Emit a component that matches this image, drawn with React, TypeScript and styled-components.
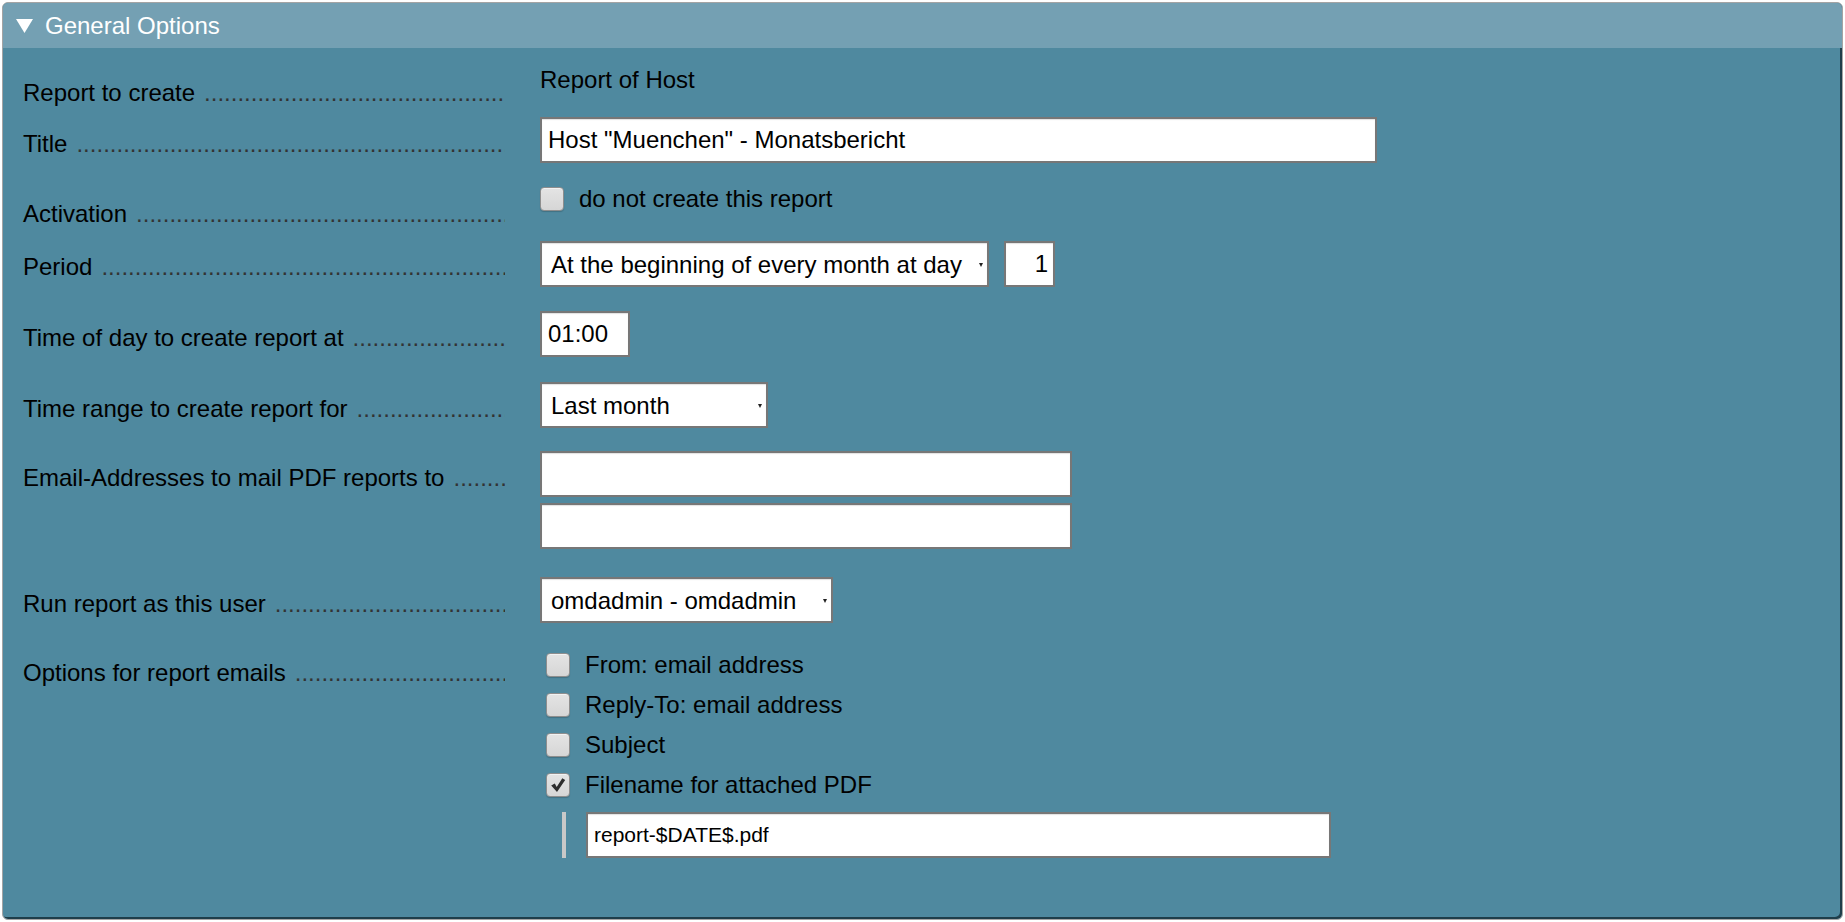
import React from "react";
import styled, { createGlobalStyle } from "styled-components";

const Global = createGlobalStyle`
  html, body { margin: 0; padding: 0; background: #ffffff; }
  body { font-family: "Liberation Sans", Arial, sans-serif; }
  * { box-sizing: border-box; }
`;

const Page = styled.div`
  width: 1845px;
  height: 922px;
  padding: 2px;
`;

const Panel = styled.section`
  height: 918px;
  border: 1px solid #a4a4a4;
  border-radius: 6px;
  background: #4f899f;
  box-shadow: inset -2px -2px 0 #1f3e4a;
  overflow: hidden;
  display: flex;
  flex-direction: column;
`;

const Header = styled.div`
  height: 45px;
  flex: none;
  display: flex;
  align-items: center;
  gap: 12px;
  padding-left: 13px;
  background: #74a0b3;
  color: #ffffff;
  font-size: 24px;
  line-height: 28px;
`;

const Body = styled.div`
  flex: 1;
  padding: 18px 0 0 20px;
  display: flex;
  flex-direction: column;
`;

const Row = styled.div<{ $mt: number }>`
  display: grid;
  grid-template-columns: 517px auto;
  align-items: start;
  margin-top: ${(p) => p.$mt}px;
`;

const Label = styled.div<{ $top: number }>`
  display: flex;
  padding: ${(p) => p.$top}px 35px 0 0;
  margin-bottom: -${(p) => p.$top}px;
  font-size: 24px;
  line-height: 28px;
  color: #000;
  white-space: nowrap;
`;

const Dots = styled.span`
  flex: 1;
  min-width: 0;
  overflow: hidden;
  margin-left: 9px;
  color: #333333;
`;

const Value = styled.div`
  display: flex;
  flex-direction: column;
  align-items: flex-start;
  font-size: 24px;
  line-height: 28px;
  color: #000;
`;

const fieldBase = `
  height: 46px;
  border: 2px solid #777777;
  border-radius: 0;
  background: #ffffff;
  color: #000000;
  font-family: "Liberation Sans", Arial, sans-serif;
  font-size: 24px;
  outline: none;
  margin: 0;
  box-shadow: inset 0 1px 1px rgba(0, 0, 0, 0.12);
`;

const TextInput = styled.input<{ $w: number; $right?: boolean; $fs?: number }>`
  ${fieldBase}
  width: ${(p) => p.$w}px;
  padding: 0 5px 0 6px;
  text-align: ${(p) => (p.$right ? "right" : "left")};
  font-size: ${(p) => p.$fs ?? 24}px;
`;

const SelectWrap = styled.span`
  position: relative;
  display: inline-block;
  &::after {
    content: "";
    position: absolute;
    right: 6px;
    top: 22px;
    border-left: 2.5px solid transparent;
    border-right: 2.5px solid transparent;
    border-top: 4px solid #222;
    pointer-events: none;
  }
`;

const Select = styled.select<{ $w: number }>`
  ${fieldBase}
  appearance: none;
  -webkit-appearance: none;
  width: ${(p) => p.$w}px;
  padding: 0 0 0 9px;
`;

const Inline = styled.div<{ $gap: number }>`
  display: flex;
  align-items: center;
  gap: ${(p) => p.$gap}px;
`;

const Stack = styled.div<{ $gap: number }>`
  display: flex;
  flex-direction: column;
  gap: ${(p) => p.$gap}px;
`;

const CheckLine = styled.label<{ $h: number }>`
  display: flex;
  align-items: center;
  gap: 15px;
  height: ${(p) => p.$h}px;
  cursor: default;
`;

const CheckList = styled.div`
  display: flex;
  flex-direction: column;
  margin-left: 6px;
`;

const Box = styled.span`
  flex: none;
  width: 24px;
  height: 24px;
  display: inline-flex;
  align-items: center;
  justify-content: center;
  border: 1px solid #8e8e8e;
  border-radius: 4px;
  background: linear-gradient(#e4e4e4, #d6d6d6);
  box-shadow: inset 0 1px 0 #f2f2f2, 0 1px 1px rgba(0, 0, 0, 0.18);
`;

const SubField = styled.div`
  display: flex;
  align-items: stretch;
  margin: 7px 0 0 22px;
  gap: 20px;
`;

const Bar = styled.span`
  width: 4px;
  background: #c8c8c8;
`;

const Dotline = () => <Dots>{".".repeat(120)}</Dots>;

const Check = ({ checked, children, h = 40 }: { checked?: boolean; children: React.ReactNode; h?: number }) => (
  <CheckLine $h={h}>
    <Box>
      {checked && (
        <svg width="16" height="16" viewBox="0 0 16 16">
          <path d="M1.2 8.6 L4.8 6.6 L6.7 9.9 L12.3 1.2 L15.2 3.1 L7 15 Z" fill="#2e2e2e" />
        </svg>
      )}
    </Box>
    <span>{children}</span>
  </CheckLine>
);

const FieldRow = ({ label, mt, top, children }: { label: string; mt: number; top: number; children: React.ReactNode }) => (
  <Row $mt={mt}>
    <Label $top={top}>
      <span>{label}</span>
      <Dotline />
    </Label>
    <Value>{children}</Value>
  </Row>
);

export default function App() {
  return (
    <Page>
      <Global />
      <Panel>
        <Header>
          <svg width="17" height="14" viewBox="0 0 17 14">
            <polygon points="0,0 17,0 8.5,14" fill="#ffffff" />
          </svg>
          <span>General Options</span>
        </Header>
        <Body>
          <FieldRow label="Report to create" mt={0} top={13}>
            <span>Report of Host</span>
          </FieldRow>
          <FieldRow label="Title" mt={23} top={13}>
            <TextInput $w={837} defaultValue={'Host "Muenchen" - Monatsbericht'} />
          </FieldRow>
          <FieldRow label="Activation" mt={22} top={15}>
            <Check h={28}>do not create this report</Check>
          </FieldRow>
          <FieldRow label="Period" mt={28} top={12}>
            <Inline $gap={15}>
              <SelectWrap>
                <Select $w={449} defaultValue="month">
                  <option value="month">At the beginning of every month at day</option>
                </Select>
              </SelectWrap>
              <TextInput $w={51} $right defaultValue="1" />
            </Inline>
          </FieldRow>
          <FieldRow label="Time of day to create report at" mt={24} top={13}>
            <TextInput $w={90} defaultValue="01:00" />
          </FieldRow>
          <FieldRow label="Time range to create report for" mt={25} top={13}>
            <SelectWrap>
              <Select $w={228} defaultValue="last">
                <option value="last">Last month</option>
              </Select>
            </SelectWrap>
          </FieldRow>
          <FieldRow label="Email-Addresses to mail PDF reports to" mt={23} top={13}>
            <Stack $gap={6}>
              <TextInput $w={532} defaultValue="" />
              <TextInput $w={532} defaultValue="" />
            </Stack>
          </FieldRow>
          <FieldRow label="Run report as this user" mt={28} top={13}>
            <SelectWrap>
              <Select $w={293} defaultValue="omd">
                <option value="omd">omdadmin - omdadmin</option>
              </Select>
            </SelectWrap>
          </FieldRow>
          <FieldRow label="Options for report emails" mt={22} top={14}>
            <CheckList>
              <Check>From: email address</Check>
              <Check>Reply-To: email address</Check>
              <Check>Subject</Check>
              <Check checked>Filename for attached PDF</Check>
            </CheckList>
            <SubField>
              <Bar />
              <TextInput $w={745} $fs={21} defaultValue="report-$DATE$.pdf" />
            </SubField>
          </FieldRow>
        </Body>
      </Panel>
    </Page>
  );
}
